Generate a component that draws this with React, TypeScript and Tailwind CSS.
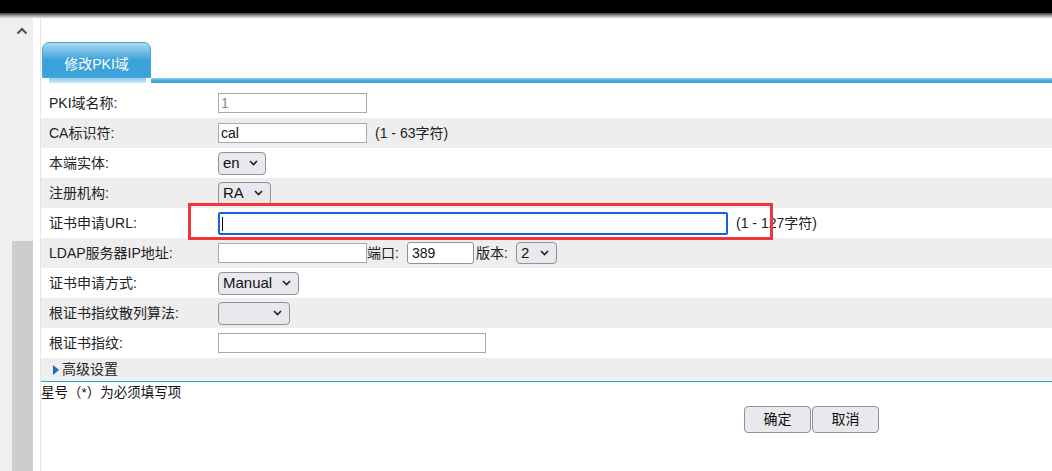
import React from "react";

const font = { fontFamily: '"Liberation Sans", "Noto Sans CJK SC", sans-serif' };

function Chevron() {
  return (
    <svg width="9" height="6" viewBox="0 0 9 6" className="shrink-0">
      <polyline points="1,1 4.5,4.5 8,1" fill="none" stroke="#222" strokeWidth="1.6" />
    </svg>
  );
}

function Select({ value, className }: { value: string; className: string }) {
  return (
    <div
      className={`flex items-center justify-between rounded-[4px] border border-[#8f8f9d] bg-[#e9e9ed] pl-[4px] pr-[7px] text-[15px] text-[#111] ${className}`}
    >
      <span>{value}</span>
      <Chevron />
    </div>
  );
}

function TextBox({ value, className, muted }: { value?: string; className: string; muted?: boolean }) {
  return (
    <input
      readOnly
      value={value ?? ""}
      className={`h-[20px] border border-[#a9a9a9] bg-white px-[2px] text-[14px] outline-none ${muted ? "text-[#8a8a8a]" : "text-[#111]"} ${className}`}
    />
  );
}

function Row({ label, grey, children }: { label: string; grey?: boolean; children?: React.ReactNode }) {
  return (
    <div className={`flex h-[30px] items-center ${grey ? "bg-[#eeeeee]" : "bg-white"}`}>
      <div className="w-[177px] shrink-0 pl-[8px] text-[14px] text-[#222]">{label}</div>
      <div className="flex items-center">{children}</div>
    </div>
  );
}

export default function App() {
  return (
    <div className="relative flex h-[471px] w-[1052px] flex-col overflow-hidden bg-white" style={font}>
      {/* top bar */}
      <div className="h-[13px] bg-black" />
      <div className="h-[5px] bg-gradient-to-b from-[#3a3a3a] via-[#9a9a9a] to-[#e4e4e4]" />

      <div className="flex flex-1">
        {/* left strip */}
        <div className="flex w-[33px] flex-col bg-[#efefef]">
          <svg width="12" height="8" viewBox="0 0 12 8" className="ml-[16px] mt-[9px]">
            <polyline points="1.5,6.5 6,2 10.5,6.5" fill="none" stroke="#555" strokeWidth="2.2" />
          </svg>
          <div className="flex-1" />
          <div className="ml-[12px] h-[230px] bg-[#cdcdcd]" />
        </div>
        <div className="w-[7px]" />
        <div className="w-[1px] bg-[#e9e4d4]" />

        {/* content */}
        <div className="flex flex-1 flex-col">
          <div className="h-[24px]" />
          <div className="flex">
            <div className="ml-[1px] flex h-[36px] w-[109px] items-center justify-center rounded-t-[7px] border border-[#4aa6da] bg-gradient-to-b from-[#a7dbf4] via-[#3aa2da] to-[#3da3d9] pt-[9px] text-[14px] text-white">
              修改PKI域
            </div>
          </div>
          <div className="flex h-[6px]">
            <div className="w-[8px]" />
            <div className="h-[5px] w-[97px] bg-gradient-to-b from-[#8fcdee] to-[#cde9f7]" />
            <div className="w-[5px]" />
            <div className="h-[5px] flex-1 bg-gradient-to-b from-[#8fd0f0] via-[#45aadf] to-[#3aa3da]" />
          </div>
          <div className="h-[4px]" />

          <Row label="PKI域名称:">
            <TextBox value="1" muted className="w-[149px]" />
          </Row>
          <Row label="CA标识符:" grey>
            <TextBox value="cal" className="w-[149px]" />
            <span className="ml-[8px] text-[14px] text-[#222]">(1 - 63字符)</span>
          </Row>
          <Row label="本端实体:">
            <Select value="en" className="h-[23px] w-[48px]" />
          </Row>
          <Row label="注册机构:" grey>
            <Select value="RA" className="h-[23px] w-[53px]" />
          </Row>
          <Row label="证书申请URL:">
            <div className="relative h-[23px] w-[510px] rounded-[2px] border-2 border-[#1664d9] bg-white">
              <div className="absolute left-[2px] top-[3px] h-[14px] w-[1px] bg-black" />
            </div>
            <span className="ml-[8px] text-[14px] text-[#222]">(1 - 127字符)</span>
          </Row>
          <Row label="LDAP服务器IP地址:" grey>
            <TextBox className="w-[149px]" />
            <span className="w-[40px] text-[14px] text-[#222]">端口:</span>
            <input
              readOnly
              value="389"
              className="h-[22px] w-[67px] rounded-[3px] border border-[#8f8f9d] bg-white px-[4px] text-[14px] text-[#111] outline-none"
            />
            <span className="ml-[2px] w-[40px] text-[14px] text-[#222]">版本:</span>
            <Select value="2" className="h-[22px] w-[41px]" />
          </Row>
          <Row label="证书申请方式:">
            <Select value="Manual" className="h-[23px] w-[81px]" />
          </Row>
          <Row label="根证书指纹散列算法:" grey>
            <Select value="" className="h-[23px] w-[72px]" />
          </Row>
          <Row label="根证书指纹:">
            <TextBox className="w-[268px]" />
          </Row>
          <div className="flex h-[24px] items-center border-b border-[#2a9fd8] bg-[#eeeeee] pl-[12px] text-[14px] text-[#222]">
            <svg width="6" height="10" viewBox="0 0 6 10" className="mr-[3px]">
              <polygon points="0,0 6,5 0,10" fill="#1a6fc0" />
            </svg>
            高级设置
          </div>
          <div className="pt-[1px] text-[13.5px] leading-[20px] text-[#111]">星号（*）为必须填写项</div>
          <div className="ml-[703px] mt-[3px] flex gap-[1px]">
            <button className="h-[27px] w-[67px] rounded-[4px] border border-[#8f8f9d] bg-[#e9e9ed] text-[14px] text-[#111]">
              确定
            </button>
            <button className="h-[27px] w-[67px] rounded-[4px] border border-[#8f8f9d] bg-[#e9e9ed] text-[14px] text-[#111]">
              取消
            </button>
          </div>
        </div>
      </div>

      {/* highlight box */}
      <div className="absolute left-[188px] top-[203px] h-[37px] w-[585px] border-[3px] border-[#f0353b]" />
    </div>
  );
}
